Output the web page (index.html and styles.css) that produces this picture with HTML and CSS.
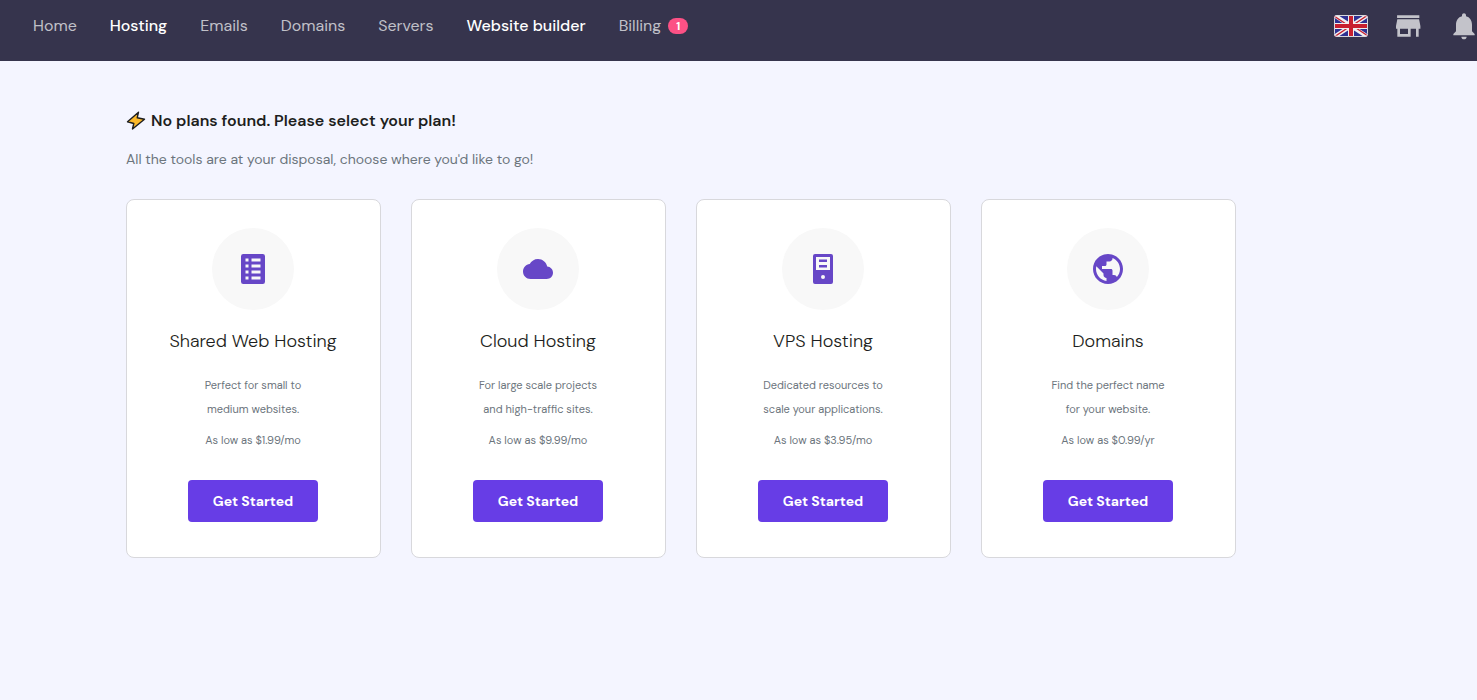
FILE: index.html
```html
<!DOCTYPE html>
<html lang="en">
<head>
<meta charset="utf-8">
<meta name="viewport" content="width=device-width, initial-scale=1">
<title>Hosting</title>
<link rel="stylesheet" href="styles.css">
</head>
<body>
<header class="topbar">
  <nav class="nav" aria-label="Main">
    <a class="nav-link" href="#">Home</a>
    <a class="nav-link active" href="#">Hosting</a>
    <a class="nav-link" href="#">Emails</a>
    <a class="nav-link" href="#">Domains</a>
    <a class="nav-link" href="#">Servers</a>
    <a class="nav-link active" href="#">Website builder</a>
    <a class="nav-link" href="#">Billing <span class="badge">1</span></a>
  </nav>
  <div class="tools">
    <button class="tool" type="button" aria-label="Language">
      <svg class="flag" viewBox="0 0 34 22">
        <defs><clipPath id="flag-shape"><rect width="34" height="22" rx="3"/></clipPath></defs>
        <g clip-path="url(#flag-shape)">
          <path fill="#2e3192" d="M0 0h34v22H0z"/>
          <path stroke="#f0f0f0" stroke-width="4.200" d="M0 0l34 22M34 0L0 22"/>
          <path stroke="#c8202f" stroke-width="1.400" d="M0 1l15 10M34 0L19 10M34 21L19 11M0 22l15-10"/>
          <path stroke="#f0f0f0" stroke-width="6" d="M17 0v22M0 11h34"/>
          <path stroke="#c8202f" stroke-width="4" d="M17 0v22M0 11h34"/>
        </g>
        <rect x=".5" y=".5" width="33" height="21" rx="3" fill="none" stroke="#d6d6dc"/>
      </svg>
    </button>
    <button class="tool" type="button" aria-label="Store">
      <svg class="tool-icon" viewBox="0 0 24 24"><path d="M20.500 4H3.800v2h16.700V4zm.8 10v-2l-1-5H4l-1 5v2h1v6h10v-6h4v6h2v-6h1.300zm-9.300 4H6v-4h6v4z"/></svg>
    </button>
    <button class="tool" type="button" aria-label="Notifications">
      <svg class="tool-icon" viewBox="0 0 24 24"><path d="M12 22c1.100 0 2-.9 2-2h-4c0 1.100.89 2 2 2zm6-6v-5c0-3.070-1.640-5.640-4.500-6.320V4c0-.83-.67-1.500-1.500-1.500s-1.500.67-1.500 1.500v.68C7.630 5.360 6 7.920 6 11v5l-2 2v1h16v-1l-2-2z"/></svg>
    </button>
  </div>
</header>
<main class="page">
  <h1 class="title">
    <svg class="bolt" viewBox="0 0 20 20"><path fill="#fcb92b" stroke="#1d1e20" stroke-width="1.400" stroke-linejoin="round" d="M12.500 1.200L1.500 10.800l6.300 1.700-1.300 5.500L18.500 8.200l-7.300-1.400z"/></svg>
    No plans found. Please select your plan!
  </h1>
  <p class="subtitle">All the tools are at your disposal, choose where you'd like to go!</p>
  <section class="cards">
    <article class="card">
      <div class="disc"><svg class="icon" viewBox="0 0 24 24"><path fill-rule="evenodd" d="M5.500 2h13A1.500 1.500 0 0 1 20 3.500v17a1.500 1.500 0 0 1-1.500 1.500h-13A1.500 1.500 0 0 1 4 20.500v-17A1.500 1.500 0 0 1 5.500 2zM7 5v2h2V5zm4 0v2h6V5zM7 9v2h2V9zm4 0v2h6V9zm-4 4v2h2v-2zm4 0v2h6v-2zm-4 4v2h2v-2zm4 0v2h6v-2z"/></svg></div>
      <h2 class="name">Shared Web Hosting</h2>
      <p class="text">Perfect for small to<br>medium websites.</p>
      <p class="text">As low as $1.99/mo</p>
      <button class="start" type="button">Get Started</button>
    </article>
    <article class="card">
      <div class="disc"><svg class="icon cloud" viewBox="0 0 24 24"><path d="M19.350 10.040C18.670 6.590 15.640 4 12 4 9.110 4 6.600 5.640 5.350 8.040 2.340 8.360 0 10.910 0 14c0 3.310 2.690 6 6 6h13c2.760 0 5-2.240 5-5 0-2.640-2.050-4.780-4.650-4.960z"/></svg></div>
      <h2 class="name">Cloud Hosting</h2>
      <p class="text">For large scale projects<br>and high-traffic sites.</p>
      <p class="text">As low as $9.99/mo</p>
      <button class="start" type="button">Get Started</button>
    </article>
    <article class="card">
      <div class="disc"><svg class="icon" viewBox="0 0 36 36"><path fill-rule="evenodd" d="M10 3h16a2 2 0 0 1 2 2v26a2 2 0 0 1-2 2H10a2 2 0 0 1-2-2V5a2 2 0 0 1 2-2zm1 3v13h14V6zm3 2.500h8V11h-8zm0 5.500h8v2.500h-8zm4 10a2 2 0 1 0 0 4 2 2 0 0 0 0-4z"/></svg></div>
      <h2 class="name">VPS Hosting</h2>
      <p class="text">Dedicated resources to<br>scale your applications.</p>
      <p class="text">As low as $3.95/mo</p>
      <button class="start" type="button">Get Started</button>
    </article>
    <article class="card">
      <div class="disc"><svg class="icon" viewBox="0 0 24 24"><path d="M12 2C6.480 2 2 6.480 2 12s4.480 10 10 10 10-4.480 10-10S17.520 2 12 2zm-1 17.930c-3.950-.49-7-3.850-7-7.930 0-.62.08-1.210.21-1.790L9 15v1c0 1.100.9 2 2 2v1.930zm6.900-2.540c-.26-.81-1-1.390-1.900-1.390h-1v-3c0-.55-.45-1-1-1H8v-2h2c.55 0 1-.45 1-1V7h2c1.100 0 2-.9 2-2v-.41c2.930 1.190 5 4.060 5 7.410 0 2.080-.8 3.970-2.100 5.390z"/></svg></div>
      <h2 class="name">Domains</h2>
      <p class="text">Find the perfect name<br>for your website.</p>
      <p class="text">As low as $0.99/yr</p>
      <button class="start" type="button">Get Started</button>
    </article>
  </section>
</main>
</body>
</html>
```
FILE: styles.css
```css
* { box-sizing: border-box; }

body {
  margin: 0;
  background: #f4f5ff;
  color: #1d1e20;
  font-family: "DM Sans", Inter, sans-serif;
  overflow-x: hidden;
}

button { border: 0; font-family: inherit; cursor: pointer; }

.topbar {
  display: flex;
  justify-content: space-between;
  align-items: center;
  padding: 10px 0 19px 33px;
  background: #36344d;
}

.nav { display: flex; gap: 33px; }

.nav-link {
  display: flex;
  align-items: center;
  gap: 7px;
  color: #c0c0c8;
  font-size: 16px;
  line-height: 32px;
  white-space: nowrap;
  text-decoration: none;
}

.nav-link.active { color: #fff; font-weight: 500; }

.badge {
  padding: 0 8px;
  border-radius: 8px;
  background: #fc5185;
  color: #fff;
  font-size: 11px;
  font-weight: 700;
  line-height: 16px;
}

.tools { display: flex; gap: 24px; margin-right: -3px; }

.tool {
  display: flex;
  align-items: center;
  padding: 0;
  background: none;
}

.flag { width: 34px; height: 22px; }
.tool-icon { width: 32px; height: 32px; fill: #c3c3ca; }

.page {
  max-width: 1236px;
  padding: 48px 0 48px 126px;
}

.title {
  display: flex;
  align-items: center;
  gap: 5px;
  margin: 0;
  font-size: 16px;
  font-weight: 600;
  line-height: 24px;
}

.bolt { width: 20px; height: 20px; }

.subtitle {
  margin: 14px 0 28px;
  color: #6c757d;
  font-size: 14px;
  line-height: 24px;
}

.cards {
  display: grid;
  grid-template-columns: repeat(4, 1fr);
  gap: 30px;
}

.card {
  display: flex;
  flex-direction: column;
  align-items: center;
  padding: 28px 21px 35px 20px;
  border: 1px solid #d8d8dc;
  border-radius: 8px;
  background: #fff;
  text-align: center;
}

.disc {
  display: grid;
  place-items: center;
  width: 82px;
  height: 82px;
  border-radius: 50%;
  background: #f8f8f8;
}

.icon { width: 36px; height: 36px; fill: #6747c7; }
.icon.cloud { width: 30px; height: 30px; }

.name {
  margin: 19px 0 20px;
  font-size: 18px;
  font-weight: 300;
  line-height: 24px;
}

.text {
  margin: 0 0 7px;
  color: #6c757d;
  font-size: 11px;
  line-height: 24px;
}

.start {
  margin-top: 21px;
  padding: 0 25px;
  border-radius: 4px;
  background: #673de6;
  color: #fff;
  font-size: 14px;
  font-weight: 700;
  line-height: 42px;
  white-space: nowrap;
}
```
